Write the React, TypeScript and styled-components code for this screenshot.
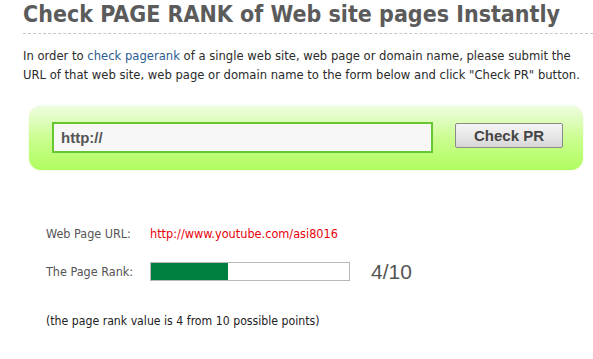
import styled, { createGlobalStyle } from 'styled-components';

const GlobalStyle = createGlobalStyle`
  body {
    margin: 0;
    background: #fff;
    font-family: "DejaVu Sans Condensed", "DejaVu Sans", sans-serif;
  }
`

const Page = styled.div`
  width: 593px;
  padding-left: 23px;
  box-sizing: border-box;
`
const Title = styled.h1`
  margin: 0;
  padding: 0 0 5px 0;
  font-size: 23px;
  line-height: 28px;
  font-weight: bold;
  color: #5b5b5b;
  white-space: nowrap;
  border-bottom: 1px dashed #c8c8c8;
`
const Intro = styled.p`
  margin: 12px 0 0 0;
  font-size: 12.9px;
  line-height: 19px;
  color: #2b2b2b;
  white-space: nowrap;
`
const Link = styled.a`
  color: #2c5d92;
  text-decoration: none;
`
const FormBox = styled.form`
  margin: 22px 10px 0 6px;
  height: 64px;
  border-radius: 12px;
  background: linear-gradient(to bottom, #eefddf 0%, #c8fd8a 55%, #b0fd60 100%);
  box-shadow: 0 0 2px #d6f5bd;
  display: flex;
  align-items: center;
  padding: 0 19px 0 23px;
  gap: 22px;
  box-sizing: border-box;
`
const UrlInput = styled.input`
  width: 381px;
  height: 31px;
  box-sizing: border-box;
  border: 2px solid #66c733;
  background: #f7f7f7;
  padding: 0 7px;
  font-family: "Liberation Sans", Arial, sans-serif;
  font-weight: bold;
  font-size: 15px;
  color: #555;
  outline: none;
  margin-top: -2px;
`
const CheckButton = styled.button`
  width: 108px;
  height: 25px;
  box-sizing: border-box;
  border: 1px solid #8a8a8a;
  border-radius: 2px;
  background: linear-gradient(to bottom, #f4f4f4 0%, #e8e8e8 50%, #d6d6d6 100%);
  font-family: "Liberation Sans", Arial, sans-serif;
  font-weight: bold;
  font-size: 15px;
  color: #444;
  padding: 0;
  margin-top: -5px;
`
const Results = styled.div`
  margin-top: 54px;
  padding-left: 23px;
  display: flex;
  flex-direction: column;
  gap: 19px;
`
const Row = styled.div`
  display: flex;
  align-items: center;
  height: 19px;
`
const Label = styled.span`
  width: 104px;
  font-size: 12.5px;
  color: #555;
`
const UrlValue = styled.span`
  font-size: 12.6px;
  color: #e8000d;
`
const Bar = styled.div`
  width: 200px;
  height: 19px;
  box-sizing: border-box;
  border: 1px solid #b8b8b8;
  background: #fff;
`
const BarFill = styled.div`
  height: 100%;
  background: #008040;
`
const Score = styled.span`
  margin-left: 21px;
  font-family: "Liberation Sans", Arial, sans-serif;
  font-size: 21px;
  color: #555;
`
const Note = styled.p`
  margin: 33px 0 0 23px;
  font-size: 12.2px;
  color: #222;
`

const rank = 4

const App = () => {
  return (
    <Page>
      <GlobalStyle />
      <Title>Check PAGE RANK of Web site pages Instantly</Title>
      <Intro>
        In order to <Link href="#">check pagerank</Link> of a single web site, web page or domain name, please submit the
        <br />
        URL of that web site, web page or domain name to the form below and click "Check PR" button.
      </Intro>
      <FormBox onSubmit={(e) => e.preventDefault()}>
        <UrlInput defaultValue="http://" />
        <CheckButton type="submit">Check PR</CheckButton>
      </FormBox>
      <Results>
        <Row>
          <Label>Web Page URL:</Label>
          <UrlValue>http://www.youtube.com/asi8016</UrlValue>
        </Row>
        <Row>
          <Label>The Page Rank:</Label>
          <Bar>
            <BarFill style={{ width: `${rank * 10 - 1}%` }} />
          </Bar>
          <Score>{rank}/10</Score>
        </Row>
      </Results>
      <Note>(the page rank value is {rank} from 10 possible points)</Note>
    </Page>
  )
}

export default App
